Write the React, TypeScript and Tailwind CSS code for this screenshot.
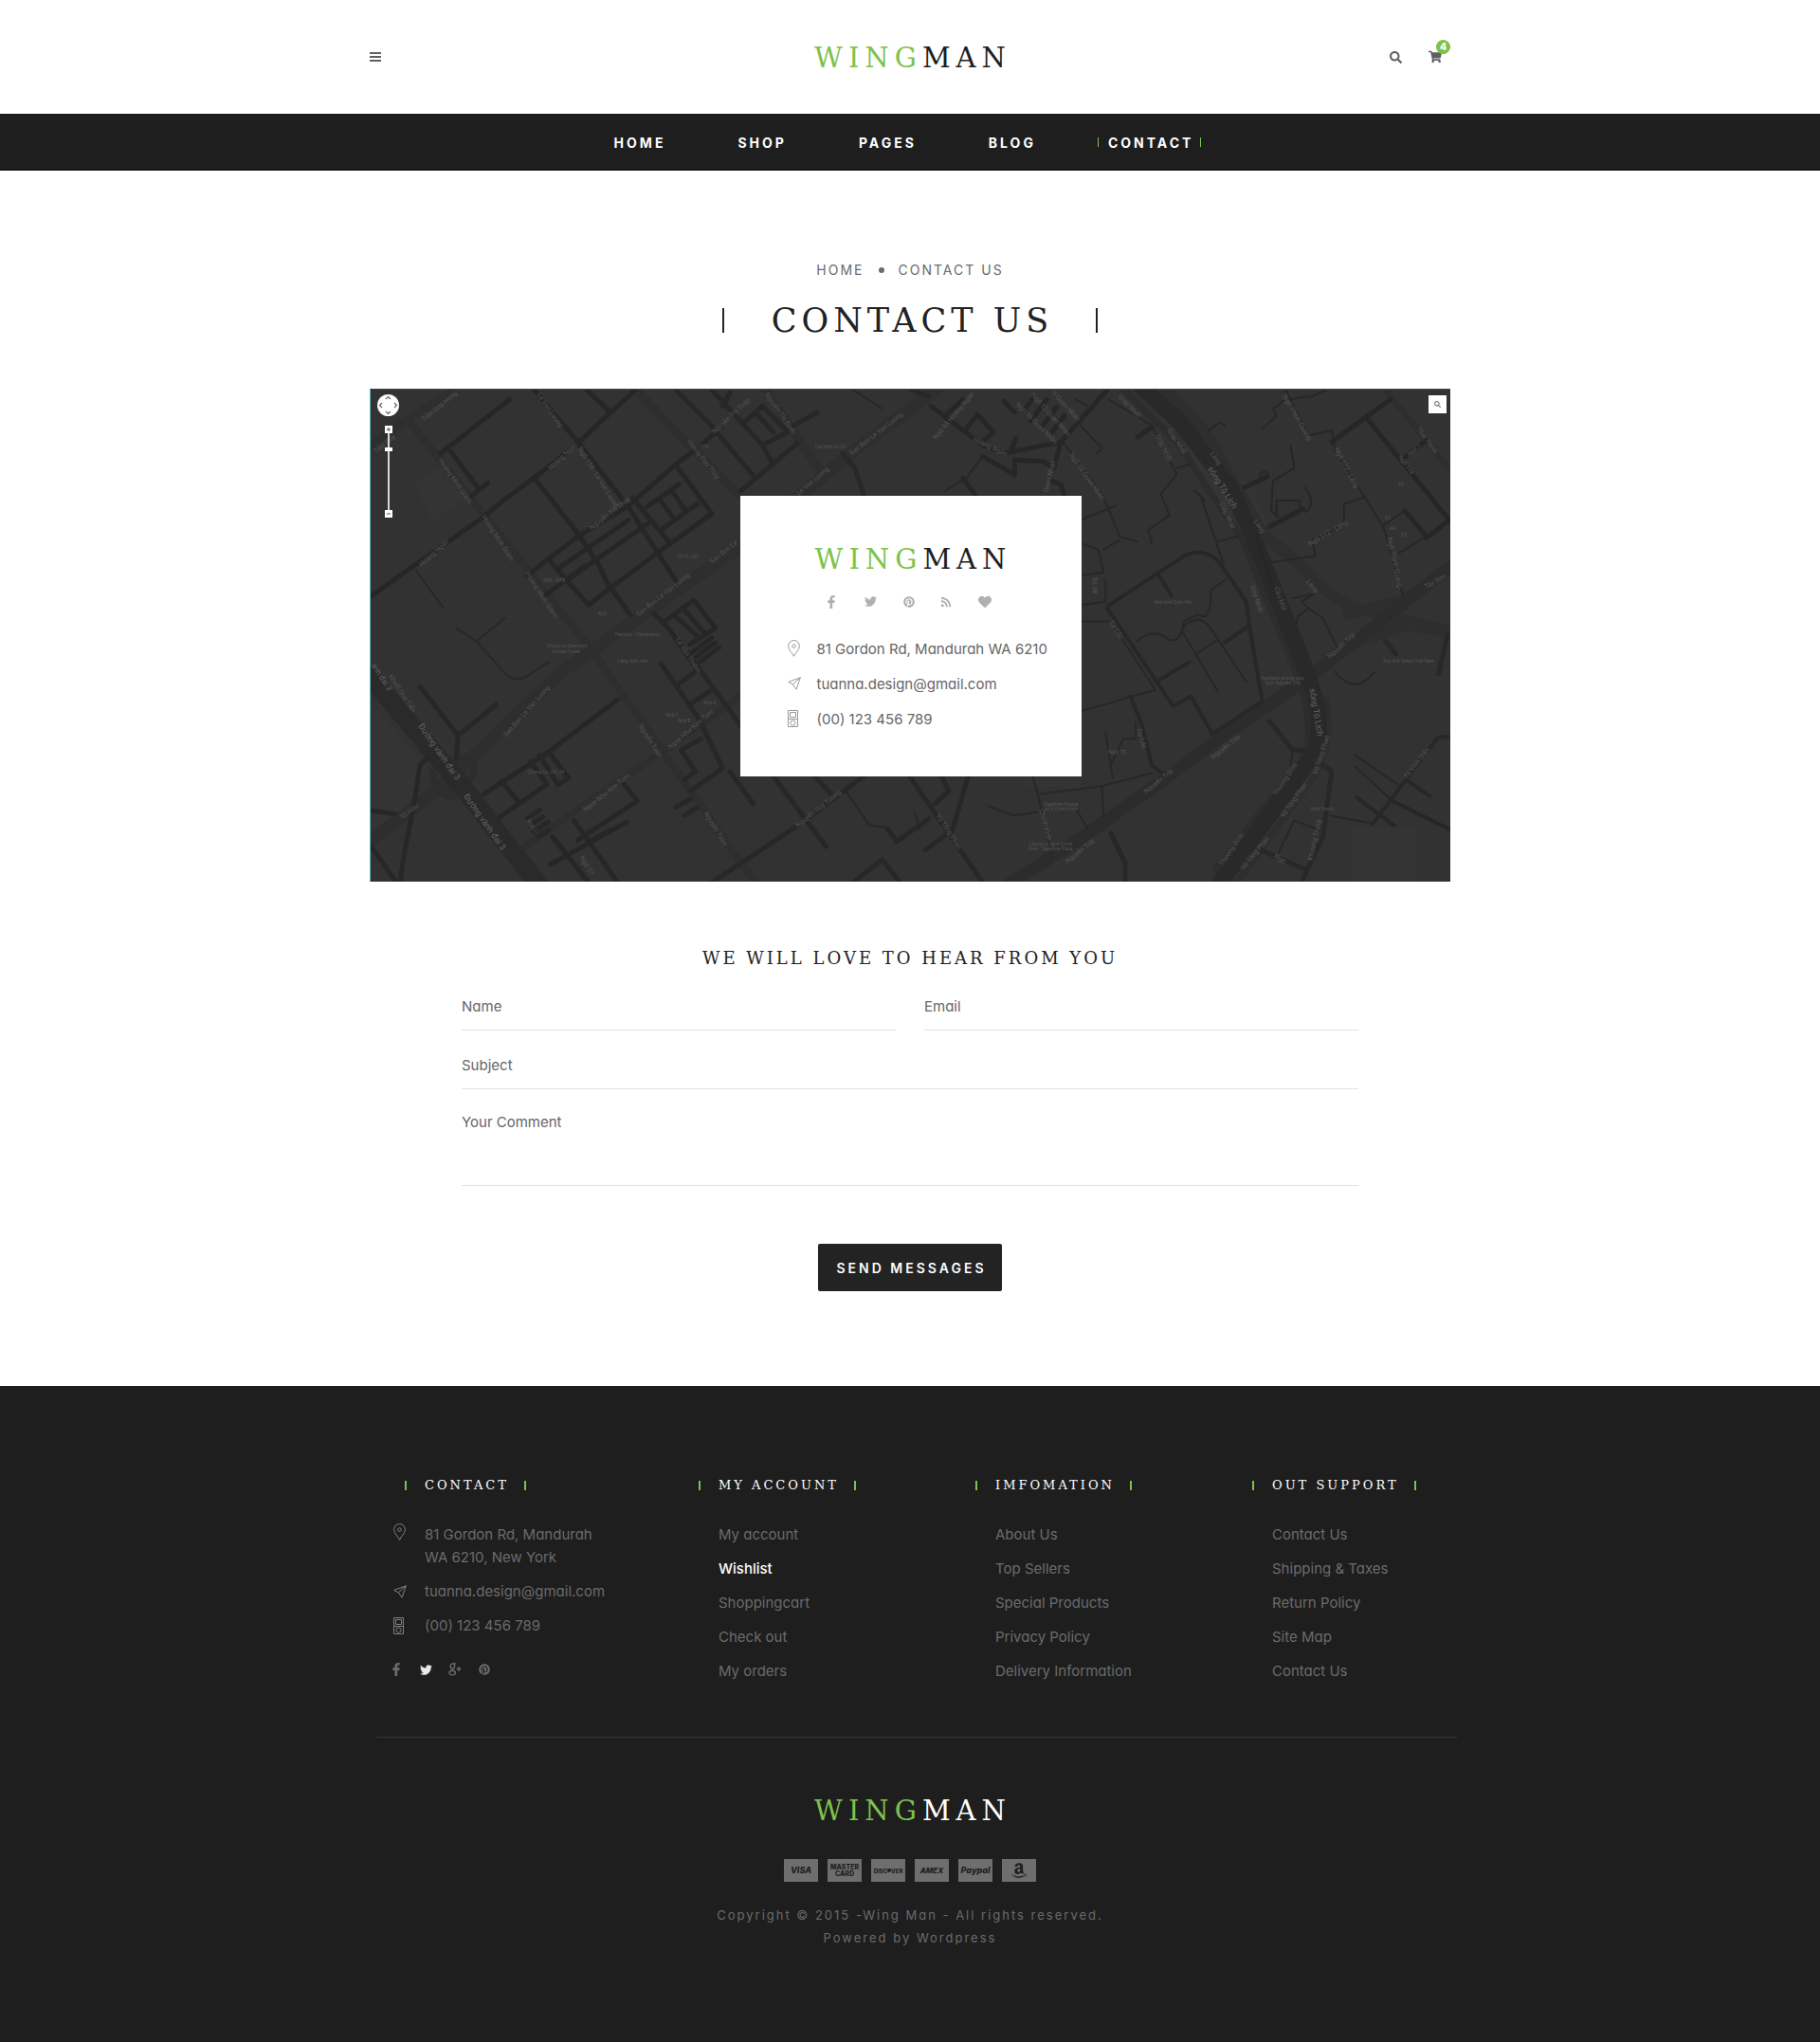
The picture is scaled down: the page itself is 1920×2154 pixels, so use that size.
import React from 'react';
import { FaAmazon, FaFacebookF, FaHeart, FaPinterest, FaRss, FaSearch, FaShoppingCart, FaTwitter } from 'react-icons/fa';

const SANS = "font-['Inter','Liberation_Sans',sans-serif] [font-feature-settings:'cv11']";
const SLAB = "font-['DejaVu_Serif',serif]";

function Logo({ dark = false }: { dark?: boolean }) {
  return (
    <a href="#home" className={`${SLAB} block pl-[6px] text-[29px] leading-[30px] tracking-[6px]`}>
      <span className="text-[#7dc24b]">WING</span>
      <span className={dark ? 'text-white' : 'text-[#1e1e1e]'}>MAN</span>
    </a>
  );
}

function MenuIcon() {
  return (
    <svg width="12" height="10" viewBox="0 0 12 10" fill="currentColor" aria-hidden="true">
      <path d="M0 0h12v2H0zM0 4h12v2H0zM0 8h12v2H0z" />
    </svg>
  );
}

function PinIcon() {
  return (
    <svg width="13" height="18" viewBox="0 0 13 18" fill="none" stroke="currentColor" aria-hidden="true">
      <path d="M6.5 17.3C5.3 13.6 .6 11 .6 6.4a5.9 5.9 0 0 1 11.8 0c0 4.6-4.7 7.2-5.9 10.9z" />
      <circle cx="6.5" cy="6.6" r="1.8" />
    </svg>
  );
}

function PlaneIcon() {
  return (
    <svg width="14" height="14" viewBox="0 0 14 14" fill="none" stroke="currentColor" strokeLinejoin="round" aria-hidden="true">
      <path d="M13.3.8.7 5.4l4.6 2.5 3.8 5.3zM13.3.8l-8 7.1" />
    </svg>
  );
}

function DeviceIcon() {
  return (
    <svg width="11" height="18" viewBox="0 0 11 18" fill="none" stroke="currentColor" aria-hidden="true">
      <path d="M.5.5h10v17H.5zM.5 9.5h10M2.5 2.5h6v5h-6z" />
      <circle cx="5.5" cy="13.5" r="2.6" />
    </svg>
  );
}

function GooglePlusIcon() {
  return (
    <svg width="14" height="14" viewBox="0 0 14 14" fill="none" stroke="currentColor" strokeWidth="1.4" aria-hidden="true">
      <ellipse cx="4.4" cy="3.6" rx="2.2" ry="2.7" />
      <path d="M4.8.9h3.2M4.6 6.3c-.8.8-.4 1.3.5 1.9" />
      <ellipse cx="4.2" cy="10.6" rx="3.2" ry="2.3" />
      <path d="M11 4v5M8.5 6.5h5" />
    </svg>
  );
}

const navItems = ['HOME', 'SHOP', 'PAGES', 'BLOG', 'CONTACT'];

function Header() {
  return (
    <header>
      <div className="mx-auto grid h-[120px] max-w-[1140px] grid-cols-3 items-center">
        <button type="button" aria-label="Menu" className="w-fit text-[#606060]">
          <MenuIcon />
        </button>
        <div className="flex justify-center pt-[2px]">
          <Logo />
        </div>
        <div className="flex items-center justify-end gap-7 pr-[9px] text-[#606060]">
          <button type="button" aria-label="Search">
            <FaSearch size={13} />
          </button>
          <button type="button" aria-label="Cart, 4 items" className="relative">
            <FaShoppingCart size={14} />
            <span className="absolute -top-[11px] left-2 flex size-[15px] items-center justify-center rounded-full bg-[#7dc24b] text-[11px] font-extrabold leading-none text-white">4</span>
          </button>
        </div>
      </div>
      <nav aria-label="Main" className="flex h-[60px] justify-center gap-[57px] border-b-2 border-[#191519] bg-[#1e1e1e] pr-4 pt-[2px]">
        {navItems.map((item) => (
          <a
            key={item}
            href={`#${item.toLowerCase()}`}
            className="flex items-center text-[14px] font-bold tracking-[3px] text-white"
          >
            <span className={item === 'CONTACT' ? 'mr-[10px] h-[10px] w-px bg-[#7dc24b]' : 'mr-[10px] w-px'} />
            {item}
            <span className={item === 'CONTACT' ? 'ml-[7px] h-[10px] w-px bg-[#7dc24b]' : 'ml-[7px] w-px'} />
          </a>
        ))}
      </nav>
    </header>
  );
}

/* Street geometry, west half: [path, width, colour] */
const westRoads: [string, number, string][] = [
  ['M30 200L130 120L260 30M130 120L640 830L1050 1480L1090 1540', 8, '#2e2e2e'],
  ['M30 1410L220 1250L560 890L640 830L1060 500L1340 235L1590 30', 13, '#2e2e2e'],
  ['M760 30L1040 350M1120 30L1190 150L1270 280', 9, '#2e2e2e'],
  ['M430 1450L620 1300L820 1150L1060 960', 7, '#2e2e2e'],
  ['M200 1200Q200 1270 260 1280M220 1260Q330 1250 310 1170Q280 1140 240 1190', 7, '#2d2d2d'],
  ['M20 900L270 1230L490 1545', 20, '#2a2a2a'],
  ['M222 225L412 60M240 205L325 330M308 355L352 316M30 662L340 420L400 365L480 300L590 205L690 100L625 30M690 100L760 30', 5, '#262626'],
  ['M480 30L600 190L740 390L870 615M480 300L600 470L660 570L680 620L745 720M460 600L600 480L740 385L870 260L940 200L1000 140', 5, '#262626'],
  ['M520 550L630 690L700 630L820 530L970 410L870 260M550 575L740 430M575 610L800 435M510 660L620 570M750 360L855 500', 5, '#262626'],
  ['M790 390L880 320M830 460L930 380M825 365L865 425M860 340L898 402', 5, '#262626'],
  ['M870 30L960 130L1090 300M1020 40L1000 80M970 30L1110 200L1140 260M1060 130L1110 80L1180 160L1110 200M1090 100L1140 160M1050 340L1205 195M1195 140L1260 100', 5, '#272727'],
  ['M1330 225L1365 270L1390 355M1568 50L1520 30', 5, '#282828'],
  ['M155 585L230 700M265 760L320 800L400 900Q435 935 470 900L520 865M320 800L400 730M1360 30L1440 88', 2, '#282828'],
  ['M165 940L270 1090L375 995M270 1090L265 1160M185 1160L165 1180L150 1290L120 1460L110 1540M30 1320L95 1330M30 1430L100 1540', 5, '#272727'],
  ['M340 1270L520 1140L710 980M390 1230L435 1290M385 1340L515 1240L470 1170M495 1150L545 1240L575 1220L520 1140', 5, '#262626'],
  ['M830 870L935 1040L1000 1190L910 1260M880 800L1050 1060M880 930L930 890M915 990L970 950M940 1100L885 1135L925 1200L895 1225', 5, '#272727'],
  ['M810 715L850 760L930 890M840 740L920 675L980 760L910 810M865 720L935 790M890 700L950 775M910 840L970 790M920 855L980 805M930 870L990 820', 5, '#262626'],
  ['M525 1485L735 1355M530 1400L630 1540M590 1350L710 1540M545 1420L580 1470M640 1410L690 1380M765 1290L600 1410M765 1290L725 1235', 5, '#262626'],
  ['M460 1345L495 1318M468 1365L505 1338M478 1385L518 1355M490 1400L520 1380M870 1310L910 1285M895 1335L930 1310', 5, '#272727'],
  ['M1020 1200L1085 1300M1140 1215L1285 1430M970 1540L1215 1360L1400 1205M1455 1375L1480 1415L1568 1345M1360 1540L1440 1470L1490 1540M1255 1215L1300 1270', 5, '#272727'],
  ['M1340 1260L1405 1365L1455 1372M1530 1330L1545 1380', 2, '#272727'],
];

/* Street geometry, east half */
const eastRoads: [string, number, string][] = [
  ['M600 30L750 190L860 370L930 480L1080 880L1110 980Q1135 1120 1090 1180L860 1500', 7, '#2d2d2d'],
  ['M720 30L830 160L990 470L1100 570Q1180 680 1290 710L1520 770M1230 720L1400 670M1290 790L1400 750L1520 775', 12, '#2e2e2e'],
  ['M280 1545L500 1390L720 1220L880 1090L1110 920L1300 760L1520 570', 13, '#2c2c2c'],
  ['M1170 980Q1190 1120 1140 1210L920 1540M1335 30L1520 280', 6, '#2e2e2e'],
  ['M650 20L760 130L900 330L960 470L1110 880L1140 980Q1165 1100 1120 1170L870 1545', 17, '#292929'],
  ['M60 80L205 200L265 225L425 190M100 110L150 60M160 150L190 105L235 160L210 185M405 270L425 190L555 30M265 65L295 100M285 215L298 180', 5, '#262626'],
  ['M205 235L295 290V245L375 250L405 270M150 300L185 355M400 310L425 320L435 355M340 125L385 60M370 145L412 85M320 95L350 50M400 160L435 110', 5, '#262626'],
  ['M560 690L700 590L770 540Q830 510 870 560L945 680L955 760L990 985L850 1085L790 970L740 1000L555 700ZM700 600L735 660M700 920L785 865M885 805L950 755M620 970L650 1050L680 1180L720 1215', 4, '#272727'],
  ['M640 800Q680 760 720 790T770 740L805 720M865 955L765 770Q770 740 810 735Q830 735 850 770L945 925M805 840L860 800M890 610L845 645Q850 700 830 725L805 720', 2, '#272727'],
  ['M480 1015L690 950L570 750M430 190L540 350L560 400L590 480L640 495M480 430L580 385M480 500L530 520L545 590L480 600M550 615V680L480 690M480 740H565M545 520L590 490', 2, '#272727'],
  ['M560 60L680 140L750 290L705 350L730 415L670 460L680 500M750 270L785 260M815 350L880 560M800 340L830 370M865 495L920 480M840 155L870 130L885 140', 2, '#272727'],
  ['M465 60L500 80M480 140L540 210L525 225M100 340L160 300L205 235', 2, '#272727'],
  ['M640 175L680 145M940 330L1005 295M1010 450L1105 395M1285 120L1515 430L1450 485M1185 190L1350 60M1390 400L1450 480M1380 245L1450 185', 5, '#262626'],
  ['M1030 420V370H1095V395M1070 205L1080 270L1020 310L1015 400L1035 420M1110 330Q1145 380 1110 405M985 300Q980 280 1000 282Q1015 295 1000 305M970 470L1015 620L1050 700', 2, '#262626'],
  ['M1055 30L1120 170L1185 155L1195 220L1275 355L1330 450L1385 660M1275 360L1220 380V445L1130 490L1140 540L1010 560M990 150L1030 110L1020 90L1055 60L1130 50L1170 30M1325 450L1390 400M1375 530L1450 480', 2, '#272727'],
  ['M1075 670L1135 655L1100 680L1120 700L1160 730L1200 820M1085 750L1090 725L1120 700', 2, '#272727'],
  ['M1335 800L1365 840M1510 780L1485 900M1010 1045L1075 1135H1105M1160 1180L1185 1200L1160 1400L1100 1540M985 1440L1110 1500', 5, '#282828'],
  ['M1195 895Q1250 970 1305 895M1075 1135L1070 1180M1250 1150L1370 1240M1250 1185L1355 1290M1180 1335L1300 1360M1035 1450L1080 1350L1150 1380', 2, '#272727'],
  ['M1355 1290L1520 1380M1300 1360L1480 1100Q1490 1090 1520 1095M1400 1230L1460 1275M1255 1280L1360 1365', 4, '#272727'],
  ['M345 1215L360 1270L400 1460M360 1270L540 1245L680 1205M550 1080L570 1220M635 1050V1100H600L565 1180M540 1245L545 1340M470 1320L500 1375M220 1305L290 1335L360 1325', 2, '#272727'],
  ['M565 1390L605 1480V1540M165 1215L120 1380L45 1440M0 1215L205 1540M70 1300L110 1260L90 1215', 5, '#272727'],
];

/* [text, x, y, angle, size] */
const labels: [string, number, number, number, number][] = [
  ['Trần Duy Hưng', 73, 18, -40, 7], ['Trần Duy', 15, 58, -40, 7], ['Hoàng Minh Giám', 89, 97, 55, 7], ['Hoàng Minh Giám', 134, 157, 57, 7],
  ['Hoàng Minh Giám', 180, 217, 57, 7], ['Hoàng Ngân', 203, 71, -42, 7], ['Hoàng Ngân', 67, 173, -42, 7],
  ['Le Van Luong', 189, 22, 55, 7], ['Ngõ 155 - Le Van Luong', 240, 93, 58, 7], ['Nguyễn Thị Thập', 253, 131, -38, 7],
  ['Nguyễn Thị Thập', 381, 28, -43, 7], ['Nguyễn Thị Định', 432, 25, 55, 7], ['Hoàng Đạo Thúy', 351, 74, 52, 7], ['17T4', 351, 61, 0, 5], ['Tòa Nhà DCCD', 485, 61, 0, 5],
  ['San Bon Le Van Luong', 534, 47, -38, 7], ['San Bon Le Van Luong', 309, 217, -38, 7], ['San Bon Le Van Luong', 165, 340, -48, 7],
  ['Le Van Luong', 467, 97, -40, 7], ['San Bon Le', 373, 172, -38, 7], ['N2E', 245, 237, 0, 5], ['NTK - NTB', 194, 202, 0, 5], ['VPT2 JSC', 335, 177, 0, 5],
  ['Handico - Handiresco', 282, 259, 0, 5], ['Chung cư Diamond', 207, 271, 0, 5], ['Flower Tower', 207, 277, 0, 5],
  ['Làng Sinh viên', 277, 287, 0, 5], ['Đường vành đai 3', 72, 383, 55, 9], ['Đường vành đai 3', 120, 457, 55, 9],
  ['ành đai 3', 11, 304, 57, 8], ['Khuất Duy Tiến', 33, 321, 57, 7], ['Nguyễn Tuân', 295, 371, 58, 7], ['Nguyễn Tuân', 364, 464, 58, 7],
  ['Nguy Như Kon Tum', 338, 359, -40, 7], ['Nguy Như Kon Tum', 249, 426, -38, 7], ['Chung Cư JSC 34', 185, 404, 0, 5],
  ['Tố Hữu', 41, 446, -38, 7], ['Ngõ 27', 228, 503, 60, 7], ['Ngõ 1', 170, 461, 60, 6], ['Nguyễn Huy Tưởng', 473, 443, -38, 7], ['Lê Văn Thiêm', 335, 281, 57, 7],
  ['Nhà A', 358, 331, 0, 5], ['Nhà C', 318, 344, 0, 5], ['Nhà E', 331, 350, 0, 5],
  ['Ngõ 93 Hoàng Ngân', 616, 28, -50, 7], ['5 Quan Nhân', 734, 18, 48, 7], ['Ngõ 12 Quan Nhân', 718, 27, 48, 7], ['Ngõ 16 Quan Nhân', 703, 36, 45, 7], ['Hoàng Ngân', 654, 61, 25, 7],
  ['Quan Nhân', 717, 92, -75, 7], ['Ngõ 53 Quan Nhân', 756, 92, 55, 7], ['Giáp Nhất', 801, 18, 45, 7], ['Giáp Nhất', 837, 62, 64, 7], ['Giáp Nhất', 851, 55, 55, 7],
  ['Giáp Nhất', 904, 133, 65, 7], ['Giáp Nhất', 935, 221, 72, 7], ['Láng', 892, 73, 55, 7], ['Láng', 938, 145, 55, 7], ['Láng', 994, 208, 50, 7],
  ['sông Tô Lịch', 899, 104, 58, 9], ['sông Tô Lịch', 998, 341, 80, 9], ['Cầu Mới', 960, 221, 70, 7],
  ['Ngõ Thịnh Quang', 978, 30, 60, 7], ['Ngõ Thịnh Quang', 1081, 183, 78, 7], ['Ngõ 112 - Láng', 1030, 83, 62, 7], ['Ngõ 112 - Láng', 1011, 152, -30, 7],
  ['Thái Thịnh', 1115, 54, 55, 7], ['Ngõ 1', 1102, 64, -42, 6], ['Ngõ 119', 1093, 80, 55, 6], ['A3', 1088, 100, 0, 5], ['A2', 1074, 136, 0, 5], ['A4', 1079, 147, 0, 5], ['C5', 1091, 154, 0, 5],
  ['Tổ 38', 764, 207, 88, 7], ['Nhà kính Dịnh Hải', 847, 225, 0, 5], ['Cự Lộc', 787, 254, 58, 7], ['Cự Lộc', 814, 369, 72, 7],
  ['Agribank phòng giao', 963, 305, 0, 5], ['dịch Nguyễn Trãi', 963, 310, 0, 5], ['Nguyễn Trãi', 1025, 271, -42, 7],
  ['Nguyễn Trãi', 903, 378, -38, 7], ['Nguyễn Trãi', 832, 414, -38, 7], ['Nguyễn Trãi', 749, 488, -38, 7],
  ['Tòa nhà Talbot Việt Nam', 1096, 287, 0, 5], ['Ngõ 75', 788, 383, 0, 6], ['Thượng Đình', 966, 412, -55, 7], ['Thượng Đình', 909, 486, -55, 7],
  ['Vũ Tông Phan', 975, 434, -55, 7], ['Vũ Tông Phan', 1004, 386, -72, 7], ['Vũ Tông Phan', 934, 490, -50, 7], ['Vũ Tông Phan', 610, 467, 57, 7],
  ['Sapphire Palace', 729, 438, 0, 5], ['số 4 Chính Kinh', 729, 443, 0, 5], ['Chung cư số 4 Chính', 718, 480, 0, 5], ['Kinh - Sapphire Place', 718, 485, 0, 5],
  ['Tô Vĩnh Diện', 1105, 395, -52, 7], ['Khương Trung', 997, 476, -78, 7], ['Nhà Thuốc', 1005, 443, 0, 5], ['Chính Kinh', 712, 460, 75, 7], ['Tây Sơn', 1124, 203, -30, 7], ['Ngõ', 960, 496, 35, 7],
];

function Streets({ roads }: { roads: [string, number, string][] }) {
  return (
    <>
      {roads.map(([d, width, color]) => (
        <path key={d} d={d} stroke={color} strokeWidth={width} vectorEffect="non-scaling-stroke" />
      ))}
    </>
  );
}

function MapDrawing() {
  return (
    <svg viewBox="0 0 1140 520" preserveAspectRatio="xMidYMid slice" className="absolute inset-0 size-full" role="img" aria-label="Street map">
      <rect width="1140" height="520" fill="#323232" />
      <g fill="#343434">
        <path d="M45 100L75 80L100 115L65 140zM0 330L60 400L30 460L0 470zM860 60L930 100L950 150L900 130zM1035 462h70v58h-70zM690 360h60v60h-60z" />
      </g>
      <g fill="none" strokeLinejoin="round" strokeLinecap="round">
        <g transform="translate(-11 -10) scale(.3827 .3445)">
          <Streets roads={westRoads} />
        </g>
        <g transform="translate(569 -10) scale(.3762 .3445)">
          <Streets roads={eastRoads} />
        </g>
      </g>
      <g textAnchor="middle" fontFamily="Roboto, sans-serif">
        {labels.map(([text, x, y, angle, size]) => (
          <text
            key={`${x}-${y}`}
            fontSize={size}
            fill={size > 7 ? '#646464' : '#545454'}
            dominantBaseline="middle"
            transform={`translate(${x} ${y}) rotate(${angle})`}
          >
            {text}
          </text>
        ))}
      </g>
    </svg>
  );
}

function Chevron({ d }: { d: string }) {
  return (
    <svg width="7" height="7" viewBox="0 0 7 7" fill="none" stroke="#666" strokeWidth="1.2" aria-hidden="true">
      <path d={d} />
    </svg>
  );
}

function MapControls() {
  return (
    <div className="absolute left-[7px] top-[5px] flex w-[23px] flex-col items-center">
      <div className="grid size-[23px] grid-cols-3 grid-rows-3 place-items-center rounded-full bg-white">
        <button type="button" aria-label="Pan up" className="col-start-2"><Chevron d="M1 5l2.500-2.500L6 5" /></button>
        <button type="button" aria-label="Pan left" className="col-start-1 row-start-2"><Chevron d="M5 1L2.500 3.500 5 6" /></button>
        <button type="button" aria-label="Pan right" className="col-start-3 row-start-2"><Chevron d="M2 1l2.500 2.500L2 6" /></button>
        <button type="button" aria-label="Pan down" className="col-start-2 row-start-3"><Chevron d="M1 2l2.500 2.500L6 2" /></button>
      </div>
      <button type="button" aria-label="Zoom in" className="mt-[10px] flex size-2 items-center justify-center bg-white">
        <svg width="4" height="4" viewBox="0 0 4 4" stroke="#555"><path d="M0 2h4M2 0v4" /></svg>
      </button>
      <input
        type="range"
        aria-label="Zoom level"
        min={0}
        max={100}
        defaultValue={20}
        className="h-[81px] w-2 appearance-none bg-[linear-gradient(#d8d8d8,#d8d8d8)] bg-[length:2px_100%] bg-center bg-no-repeat [writing-mode:vertical-lr] [&::-webkit-slider-thumb]:h-1 [&::-webkit-slider-thumb]:w-2 [&::-webkit-slider-thumb]:appearance-none [&::-webkit-slider-thumb]:bg-white"
      />
      <button type="button" aria-label="Zoom out" className="flex size-2 items-center justify-center bg-white">
        <svg width="4" height="4" viewBox="0 0 4 4" stroke="#555"><path d="M0 2h4" /></svg>
      </button>
    </div>
  );
}

function ContactMap() {
  return (
    <section aria-label="Our location" className="relative mx-auto mt-[50px] flex h-[520px] max-w-[1140px] items-center justify-center overflow-hidden border-l border-t border-l-[#58b8c8] border-t-[#33504e]">
      <MapDrawing />
      <MapControls />
      <button type="button" aria-label="Search the map" className="absolute right-1 top-[6px] flex size-[19px] items-center justify-center bg-white text-[#777]">
        <FaSearch size={7} />
      </button>
      <div className="relative flex h-[296px] w-[360px] flex-col items-center bg-white pt-[52px]">
        <Logo />
        <div className="mr-[5px] mt-[22px] flex h-4 w-[176px] items-center justify-between text-[#b0b0b0]">
          <a href="#facebook" aria-label="Facebook"><FaFacebookF size={14} /></a>
          <a href="#twitter" aria-label="Twitter"><FaTwitter size={13} /></a>
          <a href="#pinterest" aria-label="Pinterest"><FaPinterest size={12} /></a>
          <a href="#rss" aria-label="RSS"><FaRss size={12} /></a>
          <a href="#favourites" aria-label="Favourites"><FaHeart size={14} /></a>
        </div>
        <address className="mt-[30px] w-full space-y-[14px] pl-[50px] text-[15px] not-italic leading-[23px] text-[#666]">
          <p className="flex items-center"><span className="w-[31px] text-[#999]"><PinIcon /></span>81 Gordon Rd, Mandurah WA 6210</p>
          <p className="flex items-center"><span className="w-[31px] text-[#999]"><PlaneIcon /></span><a href="mailto:tuanna.design@gmail.com">tuanna.design@gmail.com</a></p>
          <p className="flex items-center"><span className="w-[31px] text-[#999]"><DeviceIcon /></span>(00) 123 456 789</p>
        </address>
      </div>
    </section>
  );
}

const fieldClass = 'block w-full border-b border-[#e1e1e1] bg-transparent text-[15px] text-[#333] outline-none placeholder:text-[#666] placeholder:opacity-100';

function ContactForm() {
  return (
    <form className="mx-auto max-w-[946px] pt-[67px]">
      <h2 className={`${SLAB} text-center text-[18px] leading-[28px] tracking-[3px] text-[#222]`}>WE WILL LOVE TO HEAR FROM YOU</h2>
      <div className="mt-[11px] grid grid-cols-2 gap-x-[30px] gap-y-[11px]">
        <div>
          <label htmlFor="name" className="sr-only">Name</label>
          <input id="name" type="text" placeholder="Name" className={`${fieldClass} h-[51px]`} />
        </div>
        <div>
          <label htmlFor="email" className="sr-only">Email</label>
          <input id="email" type="email" placeholder="Email" className={`${fieldClass} h-[51px]`} />
        </div>
        <div className="col-span-2">
          <label htmlFor="subject" className="sr-only">Subject</label>
          <input id="subject" type="text" placeholder="Subject" className={`${fieldClass} h-[51px]`} />
        </div>
        <div className="col-span-2">
          <label htmlFor="comment" className="sr-only">Your Comment</label>
          <textarea id="comment" placeholder="Your Comment" className={`${fieldClass} h-[91px] resize-none pt-[12px] leading-[24px]`} />
        </div>
      </div>
      <div className="mt-[61px] flex justify-center">
        <button type="submit" className="h-[50px] rounded-[2px] bg-[#232323] pl-[19px] pr-[16px] text-[14px] font-semibold tracking-[3px] text-white">SEND MESSAGES</button>
      </div>
    </form>
  );
}

function FooterTitle({ children }: { children: React.ReactNode }) {
  return (
    <h3 className={`${SLAB} flex items-center text-[13px] leading-[20px] tracking-[3px] text-white`}>
      <span className="mr-[19px] h-[10px] w-[2px] bg-[#7dc24b]" />
      {children}
      <span className="ml-[16px] h-[10px] w-[2px] bg-[#7dc24b]" />
    </h3>
  );
}

const columns = [
  { title: 'MY ACCOUNT', links: ['My account', 'Wishlist', 'Shoppingcart', 'Check out', 'My orders'] },
  { title: 'IMFOMATION', links: ['About Us', 'Top Sellers', 'Special Products', 'Privacy Policy', 'Delivery Information'] },
  { title: 'OUT SUPPORT', links: ['Contact Us', 'Shipping & Taxes', 'Return Policy', 'Site Map', 'Contact Us'] },
];

const cardClass = 'flex h-6 w-9 items-center justify-center bg-[#6e6e6e] font-extrabold text-[#1e1e1e]';

function Footer() {
  return (
    <footer className="mt-[100px] bg-[#1e1e1e] pb-[100px] pt-[95px] text-[#6b6b6b]">
      <div className="mx-auto grid max-w-[1140px] grid-cols-[347fr_292fr_292fr_209fr]">
        <div className="pl-[25px]">
          <div className="pl-3"><FooterTitle>CONTACT</FooterTitle></div>
          <address className="mt-[30px] text-[15px] not-italic leading-[24px]">
            <p className="flex"><span className="w-[33px] text-[#808080]"><PinIcon /></span><span>81 Gordon Rd, Mandurah<br />WA 6210, New York</span></p>
            <p className="mt-3 flex items-center"><span className="w-[33px] text-[#808080]"><PlaneIcon /></span><a href="mailto:tuanna.design@gmail.com">tuanna.design@gmail.com</a></p>
            <p className="mt-3 flex items-center"><span className="w-[33px] text-[#808080]"><DeviceIcon /></span>(00) 123 456 789</p>
          </address>
          <div className="mt-[26px] flex h-4 w-[102px] items-center justify-between">
            <a href="#facebook" aria-label="Facebook"><FaFacebookF size={14} className="-ml-1" /></a>
            <a href="#twitter" aria-label="Twitter" className="text-[#e8e8e8]"><FaTwitter size={13} /></a>
            <a href="#googleplus" aria-label="Google Plus"><GooglePlusIcon /></a>
            <a href="#pinterest" aria-label="Pinterest"><FaPinterest size={12} /></a>
          </div>
        </div>
        {columns.map((column) => (
          <div key={column.title}>
            <FooterTitle>{column.title}</FooterTitle>
            <ul className="mt-[30px] space-y-3 pl-[21px] text-[15px] leading-[24px]">
              {column.links.map((link, index) => (
                <li key={index}>
                  <a href="#link" className={link === 'Wishlist' ? 'font-medium text-white' : ''}>{link}</a>
                </li>
              ))}
            </ul>
          </div>
        ))}
      </div>
      <div className="mx-auto max-w-[1154px] pl-[14px]">
        <hr className="mt-[57px] border-[#353535]" />
      </div>
      <div className="mt-[62px] flex flex-col items-center">
        <Logo dark />
        <ul className="mt-[36px] flex gap-[10px]" aria-label="Accepted payments">
          <li className={`${cardClass} text-[9px] italic`}>VISA</li>
          <li className={`${cardClass} text-center text-[7px] leading-[7px]`}>MASTER<br />CARD</li>
          <li className={`${cardClass} text-[6px]`}>DISC<span className="size-1 rounded-full bg-[#1e1e1e]" />VER</li>
          <li className={`${cardClass} text-[8px] italic`}>AMEX</li>
          <li className={`${cardClass} text-[9px] italic`}>Paypal</li>
          <li className={cardClass}><FaAmazon size={18} aria-label="Amazon" /></li>
        </ul>
        <p className="mt-[23px] text-center text-[13px] leading-[24px] tracking-[2px]">
          Copyright © 2015 -Wing Man - All rights reserved.<br />Powered by Wordpress
        </p>
      </div>
    </footer>
  );
}

export default function App() {
  return (
    <div className={`${SANS} min-h-screen bg-white`}>
      <Header />
      <main>
        <div className="flex flex-col items-center pt-[95px]">
          <nav aria-label="Breadcrumb" className="flex items-center gap-[15px] text-[14px] leading-[20px] tracking-[2px] text-[#6b6b6b]">
            <a href="#home">HOME</a>
            <span className="size-[6px] rounded-full bg-[#6b6b6b]" />
            <span>CONTACT US</span>
          </nav>
          <h1 className={`${SLAB} mt-[21px] flex items-center text-[35px] leading-[44px] tracking-[5px] text-[#222]`}>
            <span className="mr-[50px] h-[26px] w-[2px] bg-[#222]" />
            CONTACT US
            <span className="ml-[45px] h-[26px] w-[2px] bg-[#222]" />
          </h1>
        </div>
        <ContactMap />
        <ContactForm />
      </main>
      <Footer />
    </div>
  );
}
